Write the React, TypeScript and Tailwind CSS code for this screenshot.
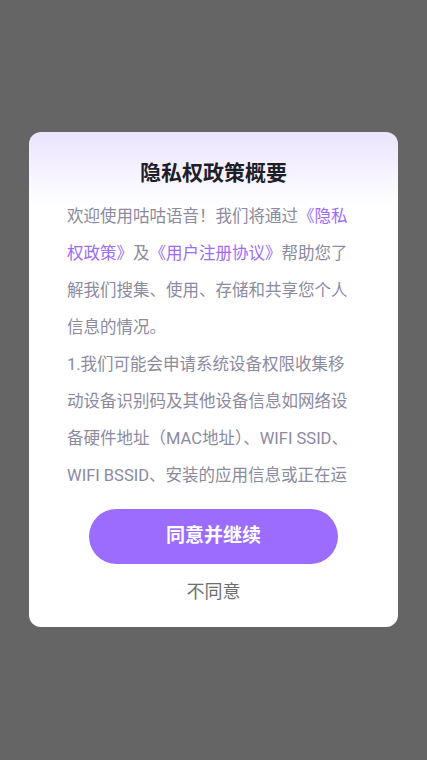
import React from "react";

export default function App() {
  const font = { fontFamily: 'Roboto, "Noto Sans CJK SC", "Noto Sans", sans-serif' };
  return (
    <div
      className="w-[427px] h-[760px] bg-[#656565] flex flex-col items-center pt-[132px]"
      style={font}
    >
      <div className="w-[369px] rounded-[12px] overflow-hidden bg-gradient-to-b from-[#ebe4fd] via-white via-[15%] to-white flex flex-col items-center pt-[27px] pb-[23px]">
        <div className="text-[21px] leading-[28px] font-bold text-[#1e1e2a]">隐私权政策概要</div>
        <div className="mt-[11px] w-[369px] px-[38px] h-[297px] overflow-hidden">
          <div className="text-[16.5px] leading-[37px] text-[#8b8a9f] w-[285px]">
            <p>
              欢迎使用咕咕语音！我们将通过<span className="text-[#9c6cf7]">《隐私权政策》</span>及
              <span className="text-[#9c6cf7]">《用户注册协议》</span>帮助您了解我们搜集、使用、存储和共享您个人信息的情况。
            </p>
            <p>
              1.我们可能会申请系统设备权限收集移动设备识别码及其他设备信息如网络设备硬件地址（MAC地址）、WIFI SSID、WIFI BSSID、安装的应用信息或正在运行的进程信息，用于识别设备、安全风控及推送通知。
            </p>
          </div>
        </div>
        <button className="mt-[14px] w-[249px] h-[55px] rounded-full bg-[#9b6cfe] text-white text-[19px] font-semibold flex items-center justify-center">
          同意并继续
        </button>
        <div className="mt-[16px] text-[18px] leading-[24px] text-[#6e6e6e]">不同意</div>
      </div>
    </div>
  );
}
